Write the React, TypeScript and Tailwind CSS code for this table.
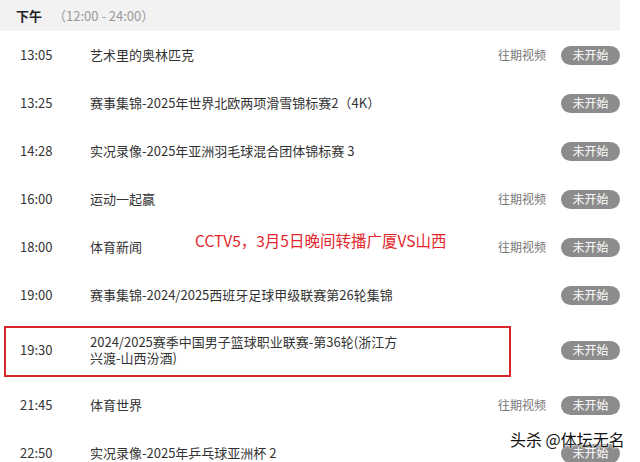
import React from 'react';

interface Program {
  time: string;
  title: string;
  replay?: boolean;
  tall?: boolean;
}

const programs: Program[] = [
  { time: '13:05', title: '艺术里的奥林匹克', replay: true },
  { time: '13:25', title: '赛事集锦-2025年世界北欧两项滑雪锦标赛2（4K）' },
  { time: '14:28', title: '实况录像-2025年亚洲羽毛球混合团体锦标赛 3' },
  { time: '16:00', title: '运动一起赢', replay: true },
  { time: '18:00', title: '体育新闻', replay: true },
  { time: '19:00', title: '赛事集锦-2024/2025西班牙足球甲级联赛第26轮集锦' },
  { time: '19:30', title: '2024/2025赛季中国男子篮球职业联赛-第36轮(浙江方兴渡-山西汾酒)', tall: true },
  { time: '21:45', title: '体育世界', replay: true },
  { time: '22:50', title: '实况录像-2025年乒乓球亚洲杯 2' },
];

function Row({ p }: { p: Program }) {
  return (
    <div className={`flex items-center pr-5 ${p.tall ? 'h-[62px]' : 'h-12'}`}>
      <span className="w-[90px] shrink-0 pl-5 text-[13px] text-[#333]">{p.time}</span>
      <span className="max-w-[320px] flex-1 text-[13px] leading-4 text-[#333]">{p.title}</span>
      <div className="ml-auto flex items-center">
        {p.replay && <span className="mr-[15px] text-[12px] text-[#777]">往期视频</span>}
        <span className="flex h-[19px] w-[59px] items-center justify-center rounded-full bg-[#8c8c8c] text-[12px] text-white">
          未开始
        </span>
      </div>
    </div>
  );
}

export default function App() {
  return (
    <div
      className="relative h-[462px] w-[640px] overflow-hidden bg-white"
      style={{ fontFamily: '"Noto Sans CJK SC", "Noto Sans", sans-serif' }}
    >
      <div className="flex h-[31px] w-[620px] items-center bg-[#f2f2f2] pl-4 text-[13px]">
        <span className="font-bold text-[#222]">下午</span>
        <span className="ml-[11px] text-[#999]">（12:00 - 24:00）</span>
      </div>
      {programs.map((p) => (
        <Row key={p.time} p={p} />
      ))}

      {/* annotation overlays */}
      <div className="absolute left-[4px] top-[326px] h-[51px] w-[507px] border-2 border-[#d9262a]" />
      <div className="absolute left-[195px] top-[230px] text-[15.5px] leading-5 text-[#e3262b]">
        CCTV5，3月5日晚间转播广厦VS山西
      </div>
      <div
        className="absolute left-[510px] top-[429px] text-[16px] leading-5 text-[#111]"
        style={{ textShadow: '0 0 2px #fff, 0 0 2px #fff, 0 0 3px #fff' }}
      >
        头杀 @体坛无名
      </div>
    </div>
  );
}
